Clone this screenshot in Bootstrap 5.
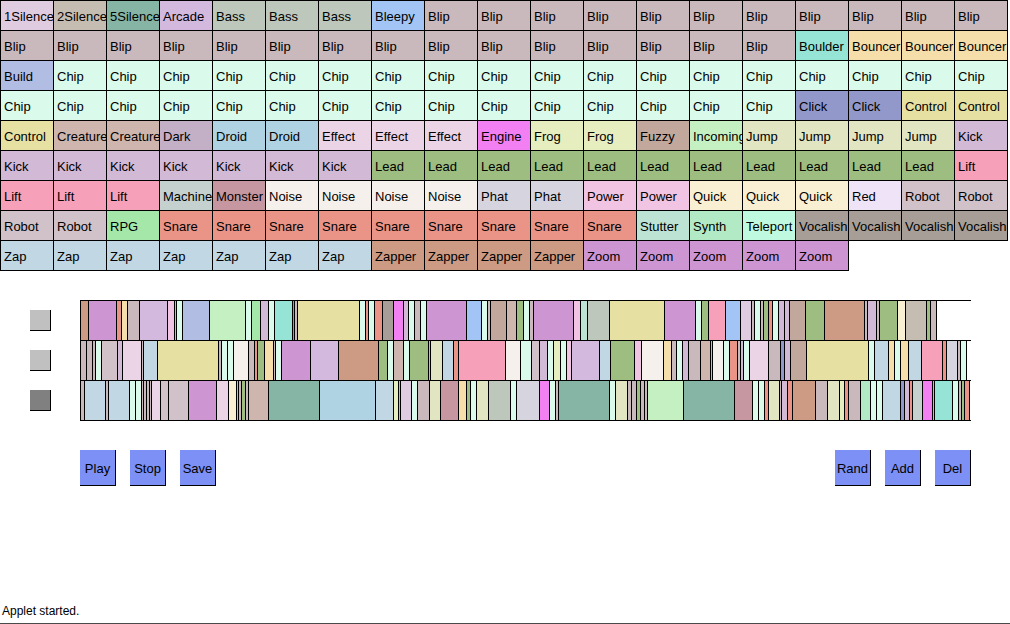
<!DOCTYPE html>
<html lang="en">
<head>
<meta charset="utf-8">
<meta name="viewport" content="width=device-width, initial-scale=1">
<title>Sound sequencer</title>
<link href="https://cdn.jsdelivr.net/npm/bootstrap@5.3.0/dist/css/bootstrap.min.css" rel="stylesheet">
<style>
  body { font-family: "Liberation Sans", Arial, sans-serif; font-size: 13px; color: #000; background: #fff; }
  .sound { width: 54px; height: 31px; margin: 0 -1px -1px 0; padding: 3px 0 0 3px; border: 1px solid #000; line-height: 26px; color: #000; }
  .sequencer { margin-top: 30px; padding: 0 39px 0 30px; }
  .track { height: 40px; gap: 29px; }
  .track:last-child { height: 41px; }
  .track-pick { appearance: none; width: 21px; height: 21px; margin: 10px 0 0; background: silver; border: solid #000; border-width: 0 1px 1px 0; border-radius: 0; }
  .track-pick:checked { background: gray; }
  .lane { border-top: 1px solid #000; min-width: 0; }
  .track:last-child .lane { border-bottom: 1px solid #000; }
  .clip { border-left: 1px solid #000; }
  .clip:last-child { border-right: 1px solid #000; }
  .controls { padding: 29px 39px 0 80px; }
  .set { gap: 14px; }
  .action { width: 36px; height: 36px; padding: 2px 0 0; border: solid #000; border-width: 0 1px 1px 0; background: #7c90f6; color: #000; line-height: 32px; }
  .status { font-size: 12px; line-height: 18px; padding: 0 2px 3px; border-bottom: 1px solid #4a4a4a; }

  .s-1Silence { background: #dfcce0; }  .s-2Silence { background: #c6bdb2; }
  .s-5Silence { background: #86b4a5; }  .s-Arcade { background: #d4b9df; }
  .s-Bass { background: #bdc7bb; }      .s-Bleepy { background: #a2c5f6; }
  .s-Blip { background: #cab9bc; }      .s-Boulder { background: #96e4d6; }
  .s-Bouncer { background: #f6deaa; }   .s-Build { background: #b1bde2; }
  .s-Chip { background: #dafbeb; }      .s-Click { background: #9298c9; }
  .s-Control { background: #e6e0a3; }   .s-Creature { background: #ceb5ae; }
  .s-Dark { background: #c3b0c6; }      .s-Droid { background: #b0d3e3; }
  .s-Effect { background: #ead4e6; }    .s-Engine { background: #f280f2; }
  .s-Frog { background: #e6edbf; }      .s-Fuzzy { background: #c2a79c; }
  .s-Incoming { background: #c5f0c1; }  .s-Jump { background: #e1e5c2; }
  .s-Kick { background: #d2b9d5; }      .s-Lead { background: #9dbd81; }
  .s-Lift { background: #f6a0b9; }      .s-Machine { background: #c4d1cf; }
  .s-Monster { background: #c696a1; }   .s-Noise { background: #f5f0eb; }
  .s-Phat { background: #d5d4df; }      .s-Power { background: #f0c4e2; }
  .s-Quick { background: #f9efd3; }     .s-Red { background: #efe4f7; }
  .s-Robot { background: #d1c2c9; }     .s-RPG { background: #a5e7a9; }
  .s-Snare { background: #ea9487; }     .s-Stutter { background: #bce3d4; }
  .s-Synth { background: #b2eac6; }     .s-Teleport { background: #bef9e0; }
  .s-Vocalish { background: #a69e97; }  .s-Zap { background: #c1d7e4; }
  .s-Zapper { background: #cd9a83; }    .s-Zoom { background: #cd96d3; }
</style>
</head>
<body class="d-flex flex-column min-vh-100">
  <main>
    <div class="d-flex flex-wrap" id="palette"></div>

    <div class="sequencer" id="sequencer">
      <div class="track d-flex align-items-start">
        <input class="track-pick flex-shrink-0" type="radio" name="track" aria-label="Track 1">
        <div class="lane d-flex flex-grow-1 h-100 overflow-hidden"></div>
      </div>
      <div class="track d-flex align-items-start">
        <input class="track-pick flex-shrink-0" type="radio" name="track" aria-label="Track 2">
        <div class="lane d-flex flex-grow-1 h-100 overflow-hidden"></div>
      </div>
      <div class="track d-flex align-items-start">
        <input class="track-pick flex-shrink-0" type="radio" name="track" aria-label="Track 3" checked>
        <div class="lane d-flex flex-grow-1 h-100 overflow-hidden"></div>
      </div>
    </div>

    <div class="controls d-flex justify-content-between">
      <div class="set d-flex">
        <button class="action" type="button">Play</button>
        <button class="action" type="button">Stop</button>
        <button class="action" type="button">Save</button>
      </div>
      <div class="set d-flex">
        <button class="action" type="button">Rand</button>
        <button class="action" type="button">Add</button>
        <button class="action" type="button">Del</button>
      </div>
    </div>
  </main>
  <footer class="status mt-auto">Applet started.</footer>

<script src="https://cdn.jsdelivr.net/npm/bootstrap@5.3.0/dist/js/bootstrap.bundle.min.js"></script>
<script>
  // Each sound family with the number of samples in it
  const sounds = `1Silence:1 2Silence:1 5Silence:1 Arcade:1 Bass:3 Bleepy:1 Blip:26 Boulder:1
    Bouncer:3 Build:1 Chip:33 Click:2 Control:3 Creature:2 Dark:1 Droid:2 Effect:3 Engine:1
    Frog:2 Fuzzy:1 Incoming:1 Jump:4 Kick:8 Lead:11 Lift:4 Machine:1 Monster:1 Noise:4 Phat:2
    Power:2 Quick:3 Red:1 Robot:4 RPG:1 Snare:9 Stutter:1 Synth:1 Teleport:1 Vocalish:4
    Zap:7 Zapper:4 Zoom:5`;

  // Clips of each track as sound:start, closed by the end of the track
  const tracks = [
    `Zapper:80 Zoom:88 Snare:116 Bouncer:121 Blip:127 Arcade:139 Power:167 Blip:174 Chip:176
     Build:182 Incoming:209 Chip:245 RPG:251 Kick:260 Chip:268 Boulder:274 Click:292 Blip:294
     Control:297 Chip:359 Snare:365 Chip:368 Snare:374 Vocalish:382 Engine:393 Kick:403 Chip:408
     Blip:414 Chip:420 Zoom:426 Bleepy:466 Chip:481 Blip:487 Fuzzy:490 Creature:506 Lead:516
     Chip:523 Blip:529 Zoom:533 Power:573 Stutter:580 Bass:587 Control:609 Zoom:664 Chip:695
     Lead:701 Lift:708 Bleepy:725 1Silence:740 Blip:751 Chip:754 Blip:760 Lead:763 Snare:768
     Chip:772 Kick:778 Kick:784 Fuzzy:789 Lead:805 Zapper:824 Blip:864 Kick:867 Blip:876
     Lead:879 Quick:897 2Silence:905 Lead:926 Blip:930 end:936`,
    `Blip:80 Blip:86 Blip:92 Chip:95 Robot:101 Kick:117 Effect:122 Blip:141 Zap:143 Control:157
     Blip:218 Chip:221 Chip:227 Noise:233 Blip:248 Snare:254 Lead:257 Bouncer:264 Blip:273
     Chip:275 Zoom:281 Arcade:310 Zapper:338 Lead:378 Chip:387 Creature:393 Chip:403 Lead:409
     Blip:428 Jump:430 Zap:442 Snare:453 Lift:458 Noise:505 Chip:520 Robot:531 Kick:539
     Chip:547 Frog:553 Chip:560 Power:566 Arcade:571 Zap:599 Lead:610 Power:634 Noise:641
     Bouncer:663 Blip:671 Chip:676 Kick:682 Blip:688 Creature:700 Blip:710 Noise:712 Chip:723
     Snare:729 Blip:737 Kick:740 Chip:743 Effect:749 Blip:768 Click:780 Kick:784 Fuzzy:790
     Control:806 Chip:868 Zap:874 Bouncer:888 Chip:894 Bouncer:900 Zap:908 Lift:921 Snare:942
     Phat:946 Blip:957 Chip:960 end:966`,
    `Blip:80 Zap:84 Blip:105 Zap:108 Chip:129 Chip:135 Blip:141 Blip:143 Blip:146 Blip:149
     Effect:151 Robot:160 Robot:168 Zoom:188 Effect:216 Quick:228 Blip:236 Blip:238 Lead:241
     Blip:245 Creature:248 5Silence:268 Droid:319 Zap:375 Frog:393 Blip:398 1Silence:400
     Chip:411 Blip:417 Jump:429 Monster:440 Bouncer:458 Lead:466 Chip:470 Jump:476 Bass:488
     Chip:510 Phat:516 Engine:539 Chip:549 Blip:555 5Silence:558 Chip:609 Jump:615 Blip:627
     Blip:631 Lead:636 Blip:640 Blip:644 Incoming:647 5Silence:683 Monster:734 Chip:752
     Chip:758 Snare:764 Jump:768 Blip:779 Kick:781 Snare:787 Zapper:792 Blip:815 Jump:827
     Frog:839 Snare:844 Blip:848 Synth:860 Chip:870 Chip:876 Zap:882 Click:900 Kick:904
     Snare:909 Machine:912 Engine:922 Blip:932 Boulder:934 Chip:952 Blip:958 Lead:961
     Snare:964 end:969`
  ];

  const parse = text => text.trim().split(/\s+/).map(item => {
    const [name, value] = item.split(':');
    return { name, value: Number(value) };
  });

  const palette = document.getElementById('palette');
  for (const { name, value } of parse(sounds)) {
    for (let i = 0; i < value; i++) {
      const button = document.createElement('button');
      button.type = 'button';
      button.className = `sound s-${name} text-start text-nowrap overflow-hidden`;
      button.textContent = name;
      palette.append(button);
    }
  }

  document.querySelectorAll('.lane').forEach((lane, row) => {
    const clips = parse(tracks[row]);
    for (let i = 0; i < clips.length - 1; i++) {
      const last = i === clips.length - 2;
      const clip = document.createElement('div');
      clip.className = `clip s-${clips[i].name} flex-shrink-0`;
      clip.style.width = `${clips[i + 1].value - clips[i].value + (last ? 1 : 0)}px`;
      lane.append(clip);
    }
  });
</script>
</body>
</html>
